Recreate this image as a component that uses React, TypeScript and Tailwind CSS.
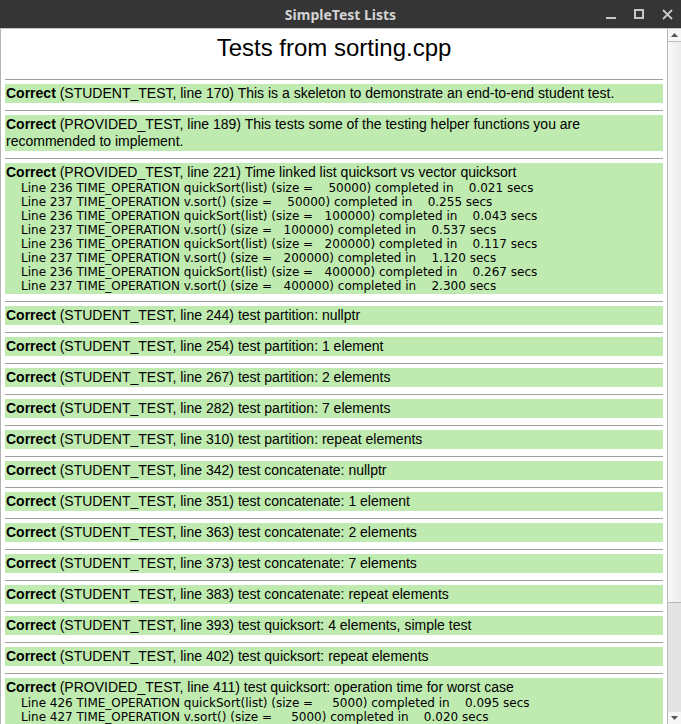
import React from 'react';

type Test = {
  kind: string;
  line: number;
  name: string;
  details?: string[];
};

const tests: Test[] = [
  { kind: 'STUDENT_TEST', line: 170, name: 'This is a skeleton to demonstrate an end-to-end student test.' },
  { kind: 'PROVIDED_TEST', line: 189, name: 'This tests some of the testing helper functions you are recommended to implement.' },
  {
    kind: 'PROVIDED_TEST',
    line: 221,
    name: 'Time linked list quicksort vs vector quicksort',
    details: [
      'Line 236 TIME_OPERATION quickSort(list) (size =    50000) completed in    0.021 secs',
      'Line 237 TIME_OPERATION v.sort() (size =    50000) completed in    0.255 secs',
      'Line 236 TIME_OPERATION quickSort(list) (size =   100000) completed in    0.043 secs',
      'Line 237 TIME_OPERATION v.sort() (size =   100000) completed in    0.537 secs',
      'Line 236 TIME_OPERATION quickSort(list) (size =   200000) completed in    0.117 secs',
      'Line 237 TIME_OPERATION v.sort() (size =   200000) completed in    1.120 secs',
      'Line 236 TIME_OPERATION quickSort(list) (size =   400000) completed in    0.267 secs',
      'Line 237 TIME_OPERATION v.sort() (size =   400000) completed in    2.300 secs',
    ],
  },
  { kind: 'STUDENT_TEST', line: 244, name: 'test partition: nullptr' },
  { kind: 'STUDENT_TEST', line: 254, name: 'test partition: 1 element' },
  { kind: 'STUDENT_TEST', line: 267, name: 'test partition: 2 elements' },
  { kind: 'STUDENT_TEST', line: 282, name: 'test partition: 7 elements' },
  { kind: 'STUDENT_TEST', line: 310, name: 'test partition: repeat elements' },
  { kind: 'STUDENT_TEST', line: 342, name: 'test concatenate: nullptr' },
  { kind: 'STUDENT_TEST', line: 351, name: 'test concatenate: 1 element' },
  { kind: 'STUDENT_TEST', line: 363, name: 'test concatenate: 2 elements' },
  { kind: 'STUDENT_TEST', line: 373, name: 'test concatenate: 7 elements' },
  { kind: 'STUDENT_TEST', line: 383, name: 'test concatenate: repeat elements' },
  { kind: 'STUDENT_TEST', line: 393, name: 'test quicksort: 4 elements, simple test' },
  { kind: 'STUDENT_TEST', line: 402, name: 'test quicksort: repeat elements' },
  {
    kind: 'PROVIDED_TEST',
    line: 411,
    name: 'test quicksort: operation time for worst case',
    details: [
      'Line 426 TIME_OPERATION quickSort(list) (size =     5000) completed in    0.095 secs',
      'Line 427 TIME_OPERATION v.sort() (size =     5000) completed in    0.020 secs',
      'Line 426 TIME_OPERATION quickSort(list) (size =    10000) completed in    0.380 secs',
      'Line 427 TIME_OPERATION v.sort() (size =    10000) completed in    0.041 secs',
    ],
  },
];

const TestRow: React.FC<{ test: Test }> = ({ test }) => (
  <div>
    <div className="mx-[4px] h-px bg-[#a0a0a0]" />
    <div className="mx-[4px] mt-[4px] mb-[7px] bg-[#c0ebb0] px-px py-px text-black">
      <div className="text-[14px] leading-[17px]">
        <span className="font-bold">Correct</span> ({test.kind}, line {test.line}) {test.name}
      </div>
      {test.details?.map((d, i) => (
        <div key={i} className="whitespace-pre pl-[15px] font-['DejaVu_Sans',sans-serif] text-[12px] leading-[14px]">
          {d}
        </div>
      ))}
    </div>
  </div>
);

export default function App() {
  return (
    <div className="flex h-[724px] w-[681px] flex-col overflow-hidden bg-white font-['Liberation_Sans',Arial,sans-serif]">
      {/* title bar */}
      <div className="relative flex h-[28px] shrink-0 items-center justify-center bg-[#353535]">
        <span className="font-['Noto_Sans',sans-serif] text-[14px] font-bold text-[#d2d2d2]">SimpleTest Lists</span>
        <div className="absolute right-[8px] top-0 flex h-[28px] items-center gap-[18px]">
          <svg width="10" height="10" viewBox="0 0 10 10">
            <rect x="0" y="8" width="10" height="2" fill="#c8c8c8" />
          </svg>
          <svg width="10" height="10" viewBox="0 0 10 10">
            <rect x="1" y="1" width="8" height="8" fill="none" stroke="#c8c8c8" strokeWidth="2" />
          </svg>
          <svg width="11" height="11" viewBox="0 0 11 11">
            <path d="M1 1 L10 10 M10 1 L1 10" stroke="#c8c8c8" strokeWidth="1.8" />
          </svg>
        </div>
      </div>

      <div className="flex min-h-0 flex-1 border-t border-[#c4c4c4]">
        {/* list content */}
        <div className="min-w-0 flex-1 overflow-hidden border-l border-[#b4b4b4]">
          <h1 className="pt-[5px] text-center text-[24px] leading-[28px] text-black">Tests from sorting.cpp</h1>
          <div className="mt-[17px]">
            {tests.map((t, i) => (
              <TestRow key={i} test={t} />
            ))}
          </div>
        </div>

        {/* scrollbar */}
        <div className="flex w-[14px] shrink-0 flex-col border-l border-[#b8b8b8] bg-[#e4e4e4]">
          <div className="flex h-[13px] shrink-0 items-center justify-center border-b border-[#c0c0c0] bg-[#f6f6f6]">
            <svg width="7" height="4" viewBox="0 0 7 4">
              <path d="M0 4 L3.5 0 L7 4 Z" fill="#555" />
            </svg>
          </div>
          <div className="h-[561px] shrink-0 border-b border-[#b8b8b8] bg-gradient-to-r from-[#f8f8f8] to-[#ececec]" />
          <div className="flex-1" />
          <div className="flex h-[12px] shrink-0 items-center justify-center bg-[#f6f6f6]">
            <svg width="7" height="4" viewBox="0 0 7 4">
              <path d="M0 0 L7 0 L3.5 4 Z" fill="#555" />
            </svg>
          </div>
        </div>
      </div>
    </div>
  );
}
